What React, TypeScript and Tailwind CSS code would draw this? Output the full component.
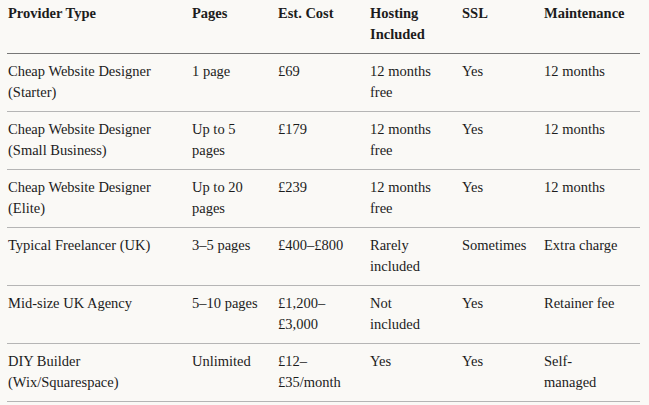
const columns = [
  { label: "Provider Type", width: "w-[184px]" },
  { label: "Pages", width: "w-[86px]" },
  { label: "Est. Cost", width: "w-[92px]" },
  { label: "Hosting Included", width: "w-[92px]" },
  { label: "SSL", width: "w-[82px]" },
  { label: "Maintenance", width: "w-[97px]" },
];

const rows = [
  ["Cheap Website Designer (Starter)", "1 page", "£69", "12 months free", "Yes", "12 months"],
  ["Cheap Website Designer (Small Business)", "Up to 5 pages", "£179", "12 months free", "Yes", "12 months"],
  ["Cheap Website Designer (Elite)", "Up to 20 pages", "£239", "12 months free", "Yes", "12 months"],
  ["Typical Freelancer (UK)", "3–5 pages", "£400–£800", "Rarely included", "Sometimes", "Extra charge"],
  ["Mid-size UK Agency", "5–10 pages", "£1,200–£3,000", "Not included", "Yes", "Retainer fee"],
  ["DIY Builder (Wix/Squarespace)", "Unlimited", "£12–£35/month", "Yes", "Yes", "Self-managed"],
];

// per-column right padding so the wraps land where the original has them
const padRight = ["pr-4", "pr-4", "pr-4", "pr-5", "pr-3", "pr-[19px]"];

export default function App() {
  return (
    <div className="min-h-screen bg-[#faf9f6] pl-[7px] font-['Liberation_Serif',serif] text-[14.5px] leading-[21px] text-[#1c1c1c]">
      <table className="w-[633px] table-fixed border-collapse">
        <thead>
          <tr className="border-b border-[#777777]">
            {columns.map((c, i) => (
              <th
                key={c.label}
                className={`${c.width} ${padRight[i]} pl-px pt-[3px] pb-2 text-left align-top font-bold`}
              >
                {c.label}
              </th>
            ))}
          </tr>
        </thead>
        <tbody>
          {rows.map((row) => (
            <tr key={row[0]} className="border-b border-[#b5b5b5]">
              {row.map((cell, i) => (
                <td key={i} className={`${padRight[i]} pl-px pt-[7px] pb-2 align-top`}>
                  {cell}
                </td>
              ))}
            </tr>
          ))}
        </tbody>
      </table>
    </div>
  );
}
